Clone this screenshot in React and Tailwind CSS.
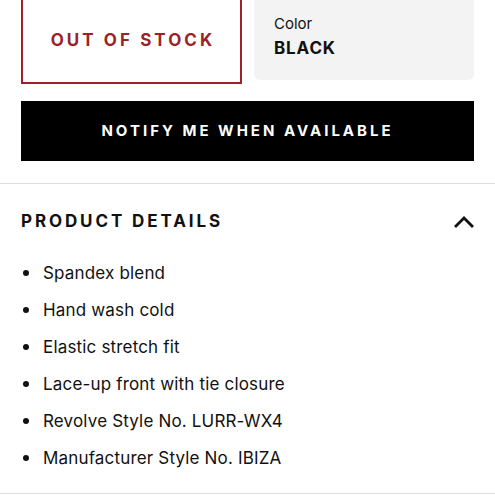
const details = [
  'Spandex blend',
  'Hand wash cold',
  'Elastic stretch fit',
  'Lace-up front with tie closure',
  'Revolve Style No. LURR-WX4',
  'Manufacturer Style No. IBIZA',
];

const App = () => {
  return (
    <div className="w-[495px] h-[495px] overflow-hidden bg-white text-[#111]" style={{ fontFamily: '"Inter", "Liberation Sans", sans-serif' }}>
      <div className="px-[21px] -mt-[4px] flex items-start gap-[12px]">
        <div className="w-[221px] h-[88px] border-2 border-[#9b2328] flex items-center justify-center">
          <span className="text-[#9b2328] font-bold text-[17px] tracking-[0.18em] pl-[3px] pt-[2px]">OUT OF STOCK</span>
        </div>
        <div className="flex-1 h-[84px] bg-[#f3f3f3] rounded-[6px] px-[20px] pt-[18px]">
          <div className="text-[15px] leading-[20px]">Color</div>
          <div className="text-[17px] font-bold tracking-[0.05em] leading-[22px] mt-[3px]">BLACK</div>
        </div>
      </div>

      <div className="px-[21px] mt-[17px]">
        <button className="w-full h-[60px] bg-black text-white font-bold text-[15px] tracking-[0.2em] flex items-center justify-center">
          NOTIFY ME WHEN AVAILABLE
        </button>
      </div>

      <div className="mt-[22px] border-t border-[#dedede]">
        <div className="px-[21px] pt-[26px] flex items-center justify-between">
          <h2 className="font-bold text-[17px] tracking-[0.17em] leading-[22px]">PRODUCT DETAILS</h2>
          <svg width="20" height="14" viewBox="0 0 20 14" fill="none" stroke="currentColor" strokeWidth="2.8" strokeLinecap="square">
            <polyline points="2,12 10,4 18,12" />
          </svg>
        </div>
        <ul className="px-[21px] mt-[30px] flex flex-col gap-[15px]">
          {details.map((d) => (
            <li key={d} className="flex items-center text-[17px] leading-[22px] tracking-[0.01em]">
              <span className="w-[6px] h-[6px] rounded-full bg-[#111] ml-[2px] mr-[14px]" />
              {d}
            </li>
          ))}
        </ul>
        <div className="mt-[24px] border-t border-[#dedede]" />
      </div>
    </div>
  );
};

export default App;
